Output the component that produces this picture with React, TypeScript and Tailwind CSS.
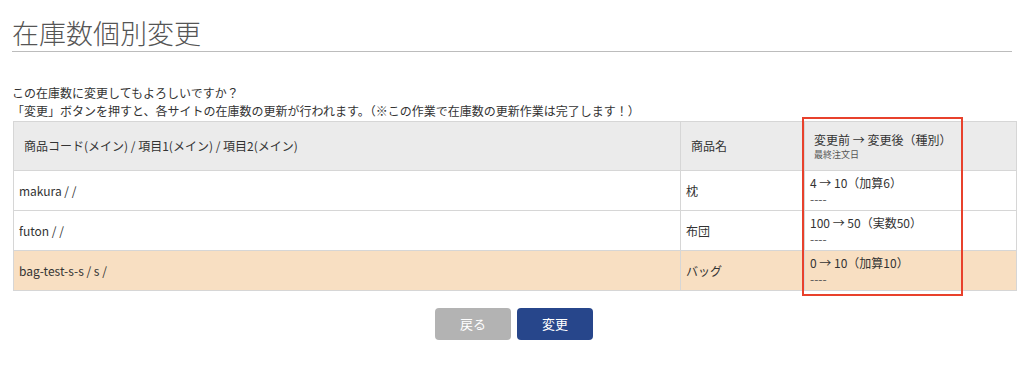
import React from "react";

interface StockRow {
  code: string;
  name: string;
  change: string;
  lastOrder: string;
  highlight?: boolean;
}

const rows: StockRow[] = [
  { code: "makura / /", name: "枕", change: "4 → 10（加算6）", lastOrder: "----" },
  { code: "futon / /", name: "布団", change: "100 → 50（実数50）", lastOrder: "----" },
  {
    code: "bag-test-s-s / s /",
    name: "バッグ",
    change: "0 → 10（加算10）",
    lastOrder: "----",
    highlight: true,
  },
];

const App: React.FC = () => {
  return (
    <div
      className="relative w-[1024px] h-[366px] bg-white text-[#333] overflow-hidden"
      style={{ fontFamily: '"Noto Sans CJK JP", "Noto Sans", sans-serif' }}
    >
      <div className="px-[12px] pt-[16px]">
        <h1 className="text-[27px] leading-[34px] font-light text-[#555] border-b border-[#bcbcbc] pb-[1px]">
          在庫数個別変更
        </h1>

        <div className="mt-[32px] text-[12px] leading-[18px]">
          <p>この在庫数に変更してもよろしいですか？</p>
          <p>「変更」ボタンを押すと、各サイトの在庫数の更新が行われます。（※この作業で在庫数の更新作業は完了します！）</p>
        </div>

        <table className="mt-[1px] ml-[1px] w-[1003px] border-collapse text-[12px] table-fixed">
          <colgroup>
            <col className="w-[667px]" />
            <col className="w-[124px]" />
            <col className="w-[212px]" />
          </colgroup>
          <thead>
            <tr className="bg-[#ebebeb] h-[49px]">
              <th className="border border-[#d6d6d6] text-left font-normal pl-[10px] align-middle">
                商品コード(メイン) / 項目1(メイン) / 項目2(メイン)
              </th>
              <th className="border border-[#d6d6d6] text-left font-normal pl-[10px] align-middle">
                商品名
              </th>
              <th className="border border-[#d6d6d6] text-left font-normal pl-[9px] align-middle">
                <div className="leading-[16px]">変更前 → 変更後（種別）</div>
                <div className="text-[9px] leading-[13px] text-[#555]">最終注文日</div>
              </th>
            </tr>
          </thead>
          <tbody>
            {rows.map((row) => (
              <tr
                key={row.code}
                className={`h-[40px] ${row.highlight ? "bg-[#f8dfc2]" : "bg-white"}`}
              >
                <td className="border border-[#d6d6d6] pl-[5px] align-middle">{row.code}</td>
                <td className="border border-[#d6d6d6] pl-[5px] align-middle">{row.name}</td>
                <td className="border border-[#d6d6d6] pl-[5px] align-top pt-[4px]">
                  <div className="leading-[16px]">{row.change}</div>
                  <div className="leading-[16px] text-[#555]">{row.lastOrder}</div>
                </td>
              </tr>
            ))}
          </tbody>
        </table>

        <div className="mt-[17px] flex justify-center gap-[6px] pl-[4px]">
          <button className="w-[76px] h-[32px] rounded-[4px] bg-[#b3b3b3] text-white text-[13px]">
            戻る
          </button>
          <button className="w-[76px] h-[32px] rounded-[4px] bg-[#27468b] text-white text-[13px]">
            変更
          </button>
        </div>
      </div>

      {/* annotation box */}
      <div className="absolute left-[802px] top-[117px] w-[161px] h-[179px] border-2 border-[#e8412c] pointer-events-none" />
    </div>
  );
};

export default App;
